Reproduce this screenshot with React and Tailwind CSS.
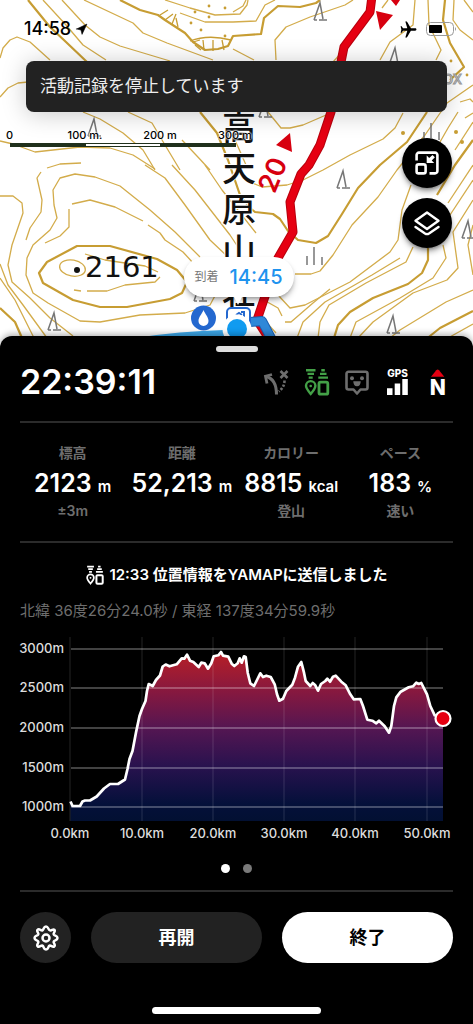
import React from "react";
import { MdAirplanemodeActive } from "react-icons/md";
import { Navigation } from "lucide-react";

const thinContours = [
  "M43,0 L66,25 L83,45 L106,60",
  "M62,0 L85,25 L100,37 L120,46 L150,55 L170,61",
  "M84,0 L133,23 L143,33 L167,43 L213,60",
  "M165,0 L190,8 L215,15 L240,14 L247,5 L248,0",
  "M180,13 L205,22 L233,22 L256,21 L265,5 L275,0",
  "M0,58 L3,48 L10,40 L17,37 L30,42 L50,60",
  "M0,97 L8,88 L18,83 L28,82",
  "M83,112 L100,119 L123,133 L143,150 L155,170",
  "M128,112 L152,123 L165,145 L180,170",
  "M182,140 L210,170",
  "M0,141 L13,144 L35,152 L80,147 L110,148 L133,155 L155,169",
  "M47,168 L60,164 L81,163",
  "M85,254 L105,260 L125,263 L145,266 L158,272",
  "M74,290 L81,291",
  "M87,291 L107,291 L125,285 L155,282 L160,277",
  "M45,243 L60,236 L69,227 L69,209",
  "M72,204 L90,200 L115,207 L143,221",
  "M148,225 L160,233 L165,240 L183,252 L195,265",
  "M200,257 L175,232 L150,210 L120,186 L95,177 L75,174 L60,178 L53,190 L54,205 L57,218 L50,230 L33,245 L27,258 L26,275 L33,293 L48,303 L80,321 L100,322 L140,315 L185,313 L210,305 L217,292",
  "M41,172 L37,178 L42,200 L41,212 L30,228 L26,240",
  "M0,196 L13,196 L22,203 L23,213 L12,245 L8,265 L12,282 L30,298 L50,318 L73,336",
  "M145,165 L165,178 L185,205 L210,240 L228,257",
  "M172,165 L195,190 L230,235 L240,250",
  "M205,165 L222,190 L256,233",
  "M0,264 L8,285 L23,305 L47,338",
  "M0,278 L15,300 L34,338",
  "M276,60 L275,40 L286,27 L310,17 L345,5 L353,0",
  "M233,49 L254,60",
  "M235,140 L246,165",
  "M233,12 L243,6 L246,0",
  "M382,8 L388,0",
  "M415,0 L413,25 L390,42 L380,60",
  "M428,0 L429,25 L441,50 L436,60",
  "M454,0 L453,20 L460,30 L473,40",
  "M464,0 L473,12",
  "M268,112 L281,128 L290,128 L303,125 L333,112",
  "M250,182 L262,187 L287,185 L303,180 L323,170 L350,155 L383,139 L395,128 L403,113",
  "M333,62 L342,52",
  "M473,85 L447,103 L425,135 L397,170 L378,197 L352,225 L333,255 L320,271 L311,274 L295,274",
  "M411,185 L402,210 L398,240 L390,252 L350,282 L305,305 L290,308 L278,295",
  "M330,289 L313,303 L291,322 L285,322",
  "M413,247 L406,262 L366,283 L329,305 L320,322 L318,338",
  "M400,258 L372,275 L325,302 L303,322 L297,338",
  "M443,245 L446,258 L433,278 L400,298 L356,322 L350,338",
  "M473,200 L453,232 L458,268 L447,280 L413,293 L373,322 L358,338",
  "M473,290 L446,302 L400,330 L390,338",
  "M473,324 L448,338",
  "M262,299 L278,308 L282,316",
  "M266,322 L276,333",
  "M473,165 L448,203",
  "M473,180 L450,215",
  "M473,225 L468,245 L473,275",
  "M460,102 L470,99 L473,102",
  "M465,118 L473,113",
  "M458,112 L448,128 L440,142",
  "M473,122 L455,150",
];

const thickContours = [
  "M28,0 L50,27 L66,42 L87,62",
  "M200,112 L217,133 L228,160 L240,195 L250,208 L255,212 L273,214 L280,219 L288,231 L298,240 L316,243 L328,236 L342,214 L358,188 L380,165 L407,142 L427,112",
  "M120,0 L140,10 L158,15 L165,20 L185,33 L193,42 L205,50 L218,49 L228,46 L233,36 L261,34 L264,18 L278,6 L300,7 L316,3 L320,0",
  "M445,0 L443,20 L450,43 L464,67 L450,80",
  "M77,246 L110,246 L157,259 L177,270 L187,282 L182,293 L170,299 L127,307 L100,307 L73,300 L43,283 L39,273 L47,262 Z",
  "M428,248 L428,260 L422,273 L408,284 L373,298 L350,312 L338,325 L334,338",
  "M0,308 L15,322 L22,338",
  "M473,311 L440,328 L425,340",
  "M473,140 L455,165 L437,195",
];

const cliffTicks =
  "M160,15 L168,10 M165,20 L173,14 M172,24 L176,14 M178,27 L176,18 M193,42 L200,40 M195,45 L201,50 M203,40 L204,50 M213,40 L213,51 M222,40 L224,50 M190,41 Q208,34 231,40";

const dots = [
  [195, 12], [209, 6], [225, 8], [209, 17], [191, 23], [201, 30], [225, 36],
  [451, 61], [467, 75], [403, 133], [456, 132], [462, 142],
];

const trees = [[88, 119], [314, 3], [259, 100], [389, 48], [337, 171], [387, 316], [462, 221], [48, 313], [194, 284]];

const hutName = [
  ["高", 140],
  ["天", 181],
  ["原", 222],
  ["山", 263],
  ["荘", 304],
];

const route =
  "M372,-4 L370,12 L344,47 L341,62 L331,112 L320,145 L309,165 L301,174 L290,202 L293,232 L278,258 L257,320 L266,334";

function TopoMap() {
  return (
    <svg
      className="absolute inset-0 h-full w-full"
      viewBox="0 0 473 352"
      preserveAspectRatio="xMidYMin slice"
      aria-hidden="true"
    >
      <rect width="473" height="352" fill="#ffffff" />
      <g fill="none" stroke="#d3ac4b" strokeWidth="1.3" strokeLinejoin="round">
        {thinContours.map((d, i) => (
          <path key={i} d={d} />
        ))}
        <ellipse cx="72.5" cy="268" rx="13" ry="8" transform="rotate(10 72 268)" />
      </g>
      <g fill="none" stroke="#c79d33" strokeWidth="2.2" strokeLinejoin="round">
        {thickContours.map((d, i) => (
          <path key={i} d={d} />
        ))}
        <path d={cliffTicks} strokeWidth="1.3" />
      </g>
      <g fill="#c79d33">
        {dots.map(([x, y], i) => (
          <circle key={i} cx={x} cy={y} r={i > 8 ? 2 : 1.4} />
        ))}
      </g>
      <g fill="none" stroke="#777" strokeWidth="1.5">
        {trees.map(([x, y], i) => (
          <path key={i} d={`M${x},${y + 17} L${x + 6},${y} L${x + 9},${y + 16} M${x + 5},${y + 17} h8 M${x},${y + 17} h3`} />
        ))}
        <path d="M307,256 v9 M314,247 v18 M322,257 v8 M424,132 v8 M431,123 v15 M439,132 v8" />
      </g>
      <g fontFamily="'Noto Sans CJK JP', sans-serif" fontSize="34" fontWeight="500" fill="#111" stroke="#fff" strokeWidth="2" paintOrder="stroke" textAnchor="middle">
        {hutName.map(([c, y]) => (
          <text key={c} x="239" y={y}>
            {c}
          </text>
        ))}
      </g>
      <text x="443" y="84" fontFamily="Inter, sans-serif" fontSize="17" fill="#fff" stroke="#999" strokeWidth="1">
        ox
      </text>
      <circle cx="77" cy="270" r="3" fill="#111" />
      <text x="85" y="277" fontFamily="'DejaVu Sans', sans-serif" fontSize="29" fill="#111">
        2161
      </text>
      <path d={route} fill="none" stroke="#b8000d" strokeWidth="9" strokeLinejoin="round" />
      <path d={route} fill="none" stroke="#e60012" strokeWidth="7" strokeLinejoin="round" />
      <g fill="#d7000f">
        <path d="M376,11 L393,15 L380,30 Z M391,0 h9 l-4,6 Z M276,145 L290,133 L292,152 Z" />
        <text x="273" y="184" fontFamily="Inter, sans-serif" fontSize="27" fontWeight="600" textAnchor="middle" transform="rotate(-68 273 175)">
          20
        </text>
      </g>
      <path d="M135,338 Q180,331 224,330 V338 Z" fill="#3ca7e8" />
      <path d="M250,322 L262,321 L272,340" fill="none" stroke="#1b5fb0" strokeWidth="10" strokeLinejoin="round" />
      <path d="M250,322 L262,321 L272,340" fill="none" stroke="#2f88d8" strokeWidth="8" strokeLinejoin="round" />
      <circle cx="203.5" cy="318" r="12.5" fill="#2468cf" />
      <path d="M203.5,310 C205,314 208.5,317 208.5,321 A5,5 0 0 1 198.5,321 C198.5,317 202,314 203.5,310 Z" fill="#fff" />
      <rect x="227" y="308" width="23" height="22" rx="4" fill="#fff" stroke="#2468cf" strokeWidth="2" />
      <path d="M236,315 l3,-2 l3,2 M241,312 h3 v6" stroke="#2468cf" strokeWidth="2" fill="none" />
      <circle cx="237" cy="329" r="14.5" fill="#fff" />
      <circle cx="237" cy="329" r="10" fill="#119bf0" />
    </svg>
  );
}

function StatusBar() {
  return (
    <div className="flex items-center justify-between pt-4 pr-4 pl-6">
      <div className="flex items-center gap-1 text-[18px] leading-[26px] font-medium text-black">
        <span>14:58</span>
        <Navigation size={13} fill="currentColor" strokeWidth={1} />
      </div>
      <div className="flex items-center gap-2 text-black">
        <MdAirplanemodeActive size={19} className="rotate-90" />
        <svg width="31" height="14" viewBox="0 0 31 14" aria-hidden="true">
          <rect x="0.5" y="0.5" width="27" height="13" rx="4" fill="none" stroke="#999" />
          <rect x="3" y="3" width="13" height="8" rx="1" fill="#000" />
          <path d="M29,5 q2,2 0,4 Z" fill="#999" />
        </svg>
      </div>
    </div>
  );
}

function ScaleBar() {
  return (
    <div className="w-[226px] pt-[17px] text-[11px] leading-[12px] font-medium text-black [text-shadow:0_0_2px_#fff,0_0_2px_#fff,0_0_2px_#fff]">
      <div className="flex">
        <span className="w-0 flex-none whitespace-nowrap"><span className="-ml-1">0</span></span>
        <span className="flex w-[150px] flex-none justify-center">100 m.</span>
        <span className="flex w-0 flex-none justify-center whitespace-nowrap">200 m</span>
        <span className="flex w-[150px] flex-none justify-center">300 m</span>
      </div>
      <div className="mt-[2px] flex h-1 border border-[#20301c]">
        <div className="flex-1 bg-[#20301c]" />
        <div className="flex-1 bg-white" />
        <div className="flex-1 bg-[#20301c]" />
      </div>
    </div>
  );
}

function MapButton({ label, children }) {
  return (
    <button
      type="button"
      aria-label={label}
      className="flex size-[50px] items-center justify-center rounded-full bg-black text-white shadow-md shadow-black/40"
    >
      {children}
    </button>
  );
}

function MapArea() {
  return (
    <section className="relative h-[352px] overflow-hidden">
      <TopoMap />
      <div className="relative">
        <StatusBar />
        <p className="mx-[26px] mt-[19px] rounded-lg bg-[#222] px-[14px] py-[13px] text-[17px] leading-[25px] text-[#eee] shadow-[0_2px_24px_rgba(0,0,0,0.22)]">
          活動記録を停止しています
        </p>
        <div className="flex items-start justify-between pr-[21px] pl-[10px]">
          <ScaleBar />
          <div className="mt-[26px] flex flex-col gap-[10px]">
            <MapButton label="全体表示">
              <svg width="26" height="26" viewBox="0 0 26 26" fill="none" stroke="currentColor" strokeWidth="2.6" aria-hidden="true">
                <path d="M2.6,10.5 V5 a2.4,2.4 0 0 1 2.4,-2.4 H21 a2.4,2.4 0 0 1 2.4,2.4 V21 a2.4,2.4 0 0 1 -2.4,2.4 H15.5" />
                <rect x="2.600" y="14.400" width="9" height="9" rx="2" />
                <path d="M12.700,5.500 L15.200,8 L18.500,4.900 L20.900,7.300 L17.700,10.600 L20.200,13 H12.700 Z" fill="currentColor" stroke="none" />
              </svg>
            </MapButton>
            <MapButton label="レイヤー">
              <svg width="28" height="26" viewBox="0 0 28 26" fill="none" stroke="currentColor" strokeWidth="2.4" strokeLinejoin="round" strokeLinecap="round" aria-hidden="true">
                <path d="M14,2.5 L25.5,10.8 L14,19 L2.5,10.8 Z" />
                <path d="M2.5,17 L12,23.500 Q14,24.800 16,23.500 L25.5,17" />
              </svg>
            </MapButton>
          </div>
        </div>
      </div>
      <div className="absolute top-[257px] left-1/2 flex h-10 -translate-x-[53px] items-center gap-[11px] rounded-full bg-white px-[11px] whitespace-nowrap shadow-md shadow-black/30">
        <span className="text-[12px] text-[#777]">到着</span>
        <span className="text-[20px] font-medium text-[#1f93ee]">14:45</span>
        <span className="absolute -bottom-2 left-[50px] border-x-4 border-t-8 border-x-transparent border-t-white" />
      </div>
    </section>
  );
}

function RouteOffIcon() {
  return (
    <svg width="28" height="28" viewBox="0 0 28 28" fill="none" stroke="#6e6e6e" strokeWidth="2.6" aria-hidden="true">
      <path d="M3,8.500 C9,10 13.500,15 13.500,26.500" strokeWidth="3" />
      <path d="M4,15.500 L2.500,8.200 L9,6.500" strokeWidth="2.800" />
      <path d="M17.500,3 L24.500,10 M24.500,3 L17.500,10" />
      <path d="M21.500,12.500 C21.500,17 19.500,20.500 16,23.500" strokeWidth="2.600" strokeDasharray="2.400 1.600" />
    </svg>
  );
}

function LocationShareIcon({ className, size }) {
  return (
    <svg className={className} width={size} height={size} viewBox="0 0 28 28" fill="none" stroke="currentColor" strokeWidth="2.4" aria-hidden="true">
      <path d="M3,2.200 h9.500 M4.500,5.900 h6.500 M5.700,9.600 h4 M18.300,2.200 h3.500 M17,5.900 h6.500 M15.300,9.600 h9.700" />
      <path d="M7.700,26 C4,21.500 3,20 3,17.800 A4.700,4.700 0 0 1 12.400,17.800 C12.400,20 11.500,21.500 7.700,26 Z" />
      <circle cx="7.700" cy="18" r="1.3" fill="currentColor" stroke="none" />
      <rect x="16" y="14.200" width="8.800" height="12" rx="1.500" strokeWidth="2.800" />
    </svg>
  );
}

function FaceIcon() {
  return (
    <svg width="28" height="28" viewBox="0 0 28 28" fill="none" stroke="#6e6e6e" strokeWidth="2.6" strokeLinejoin="round" aria-hidden="true">
      <path d="M5.500,3.800 H22.500 a2,2 0 0 1 2,2 V19.500 a2,2 0 0 1 -2,2 H17.500 L14,25.500 L10.500,21.500 H5.500 a2,2 0 0 1 -2,-2 V5.800 a2,2 0 0 1 2,-2 Z" />
      <g fill="#6e6e6e" stroke="none">
        <circle cx="9" cy="10.300" r="2" />
        <circle cx="19" cy="10.300" r="2" />
        <path d="M10.300,13.300 H17.700 Q17.700,18.300 14,18.300 Q10.300,18.300 10.300,13.300 Z" />
      </g>
    </svg>
  );
}

function GpsIcon() {
  return (
    <svg width="28" height="28" viewBox="0 0 28 28" fill="#fff" aria-hidden="true">
      <text x="14.500" y="9" fontFamily="Inter, sans-serif" fontWeight="800" fontSize="10" textAnchor="middle">
        GPS
      </text>
      <path d="M4,20.300 h5.500 V27 H4 Z M11.700,15.500 h5.500 V27 h-5.500 Z M19.300,11 h5.500 V27 h-5.500 Z" />
    </svg>
  );
}

function NorthIcon() {
  return (
    <svg className="overflow-visible" width="28" height="28" viewBox="0 0 28 28" fill="#fff" aria-hidden="true">
      <path d="M8,8.700 L13.300,2.300 Q14.700,0.800 16,2.300 L21.300,8.700 Z" fill="#e60012" />
      <text x="14.700" y="27" fontFamily="Inter, sans-serif" fontWeight="800" fontSize="21" textAnchor="middle">
        N
      </text>
    </svg>
  );
}

const stats = [
  { label: "標高", value: "2123", unit: "m", note: "±3m" },
  { label: "距離", value: "52,213", unit: "m", note: "" },
  { label: "カロリー", value: "8815", unit: "kcal", note: "登山" },
  { label: "ペース", value: "183", unit: "%", note: "速い" },
];

const profile =
  "70.5,800.5 72.5,805 80,805 82.5,800.5 85,799.5 90,799.5 96.7,795.5 104,787.5 110,783 118,783 125,778.5 127.5,768 129.5,758 132.5,750 136,731.5 139.5,715 142,708 145.5,700 147,690 148.7,683 152.7,685 156,679 160,674.5 162.7,665.5 165.7,663.5 169.5,665.3 176.7,663.3 181.7,657.3 184.3,657.7 187,653.7 190,659.7 193.3,661 198.7,666 201.3,661.7 204.7,662.3 208,667.7 211.3,662.3 213.7,655.3 218.3,654.3 221,651 223,654.7 228.3,655.7 231.7,662.7 234.3,665 237.7,662.3 239.7,657.3 241.7,661.7 244,655.3 245.7,656 247.7,671.7 250.3,682.3 254,685 257,679 260.3,672.3 263,676 266.3,674.7 270.7,676 274.7,683.3 277,693.3 279.3,699.7 283,697.7 286.3,690 292.3,683.7 295,676.7 298,665.7 301.3,661 304,671.7 305.7,680 310.3,685 312.7,682 315.3,684.3 318,689.7 321,683 325.3,680 327.3,677.7 330,680.7 333,675.7 335.7,674.7 341.3,680.7 345.7,684.3 350.3,693.3 353.7,698.3 360.3,698 363,705 367.3,718.7 372.3,719.7 376.3,722.3 379,719.7 384.7,725.3 389,731.7 391.3,725 394,705 396.3,696.3 400.7,690.7 408.7,686.3 413,685.3 416.3,681.7 418.7,683 421.3,682 427,693.3 430.3,705 434.7,714.3 443,717.3";

const altitudeLines = [
  ["3000m", 648],
  ["2500m", 687],
  ["2000m", 727],
  ["1500m", 767],
  ["1000m", 806],
];

const distanceLines = [
  ["0.0km", 70],
  ["10.0km", 142],
  ["20.0km", 213],
  ["30.0km", 284],
  ["40.0km", 355],
  ["50.0km", 427],
];

function ElevationChart() {
  return (
    <svg className="block h-auto w-full overflow-visible" viewBox="20 630 433 212" role="img" aria-label="標高グラフ">
      <defs>
        <linearGradient id="elevation" gradientUnits="userSpaceOnUse" x1="0" y1="650" x2="0" y2="820">
          <stop offset="0" stopColor="#b91f26" />
          <stop offset="0.25" stopColor="#841840" />
          <stop offset="0.46" stopColor="#531652" />
          <stop offset="0.68" stopColor="#28124e" />
          <stop offset="0.9" stopColor="#04103a" />
          <stop offset="1" stopColor="#021032" />
        </linearGradient>
      </defs>
      <polygon points={`${profile} 443,820 70.5,820`} fill="url(#elevation)" />
      {distanceLines.map(([label, x]) => (
        <g key={label}>
          <path d={`M${x},636 V820`} stroke="#fff" strokeOpacity="0.14" />
          <text x={x} y="837" fill="#ddd" fontSize="13" fontWeight="500" textAnchor="middle">
            {label}
          </text>
        </g>
      ))}
      {altitudeLines.map(([label, y]) => (
        <g key={label}>
          <path d={`M71,${y} H443`} stroke="#fff" strokeOpacity="0.35" strokeWidth="1.5" />
          <text x="64" y={y + 4} fill="#ddd" fontSize="13" fontWeight="500" textAnchor="end">
            {label}
          </text>
        </g>
      ))}
      <polyline points={profile} fill="none" stroke="#fff" strokeWidth="2.7" strokeLinejoin="round" />
      <circle cx="443" cy="717.5" r="7.5" fill="#e60012" stroke="#fff" strokeWidth="2.2" />
    </svg>
  );
}

function GearIcon() {
  return (
    <svg width="28" height="28" viewBox="0 0 28 28" fill="none" stroke="#fff" strokeWidth="2.5" strokeLinejoin="round" aria-hidden="true">
      <path d="M14,2.500 C16.500,2.500 16,5.800 18,6.400 C19.800,7 21,4.700 22.300,5.700 C24,7.200 21,9 21.700,10.500 C22.500,12 25.500,11.500 25.500,14 C25.500,16.500 22.500,16 21.700,17.500 C21,19 24,20.800 22.300,22.300 C20.800,24 19,21 17.500,21.700 C16,22.500 16.500,25.500 14,25.500 C11.500,25.500 12,22.500 10.500,21.700 C9,21 7.200,24 5.700,22.300 C4,20.800 7,19 6.300,17.500 C5.500,16 2.500,16.500 2.500,14 C2.500,11.500 5.500,12 6.300,10.500 C7,9 4,7.200 5.700,5.700 C7.200,4 9,7 10.500,6.300 C12,5.500 11.500,2.500 14,2.500 Z" />
      <circle cx="14" cy="14" r="3.500" />
    </svg>
  );
}

export default function App() {
  return (
    <main className="flex min-h-screen flex-col bg-black font-['Inter','Noto_Sans_CJK_JP',sans-serif] text-white">
      <MapArea />
      <section className="relative -mt-4 flex flex-1 flex-col rounded-t-xl bg-black pt-[10px] shadow-[0_-2px_6px_rgba(0,0,0,0.3)]">
        <div className="mx-auto h-[6px] w-[42px] rounded-full bg-[#ddd]" />
        <header className="mx-5 flex items-center justify-between border-b-2 border-[#2b2b2b] pt-2 pb-[17px]">
          <h1 className="text-[34px] leading-[44px] font-semibold">22:39:11</h1>
          <div className="flex items-center gap-3 pr-[2px]">
            <RouteOffIcon />
            <LocationShareIcon className="text-[#43a047]" size={28} />
            <FaceIcon />
            <GpsIcon />
            <NorthIcon />
          </div>
        </header>
        <dl className="grid grid-cols-4 px-[18px] pt-5 pb-5 text-center whitespace-nowrap">
          {stats.map((s) => (
            <div key={s.label} className="flex flex-col items-center">
              <dt className="text-[14px] leading-[20px] font-semibold text-[#6e6e6e]">{s.label}</dt>
              <dd className="mt-1 flex h-8 items-baseline gap-[6px] leading-[32px] font-semibold">
                <span className="text-[25px]">{s.value}</span>
                <span className="text-[15px]">{s.unit}</span>
              </dd>
              <dd className="mt-[2px] h-5 text-[14px] leading-[20px] font-semibold text-[#6e6e6e]">{s.note}</dd>
            </div>
          ))}
        </dl>
        <div className="mx-5 border-t-2 border-[#2b2b2b] pt-5">
          <p className="flex items-center justify-center gap-1 text-[15px] leading-[24px] font-semibold">
            <LocationShareIcon className="text-white" size={20} />
            12:33 位置情報をYAMAPに送信しました
          </p>
          <p className="mt-3 text-[15px] leading-[24px] text-[#6e6e6e]">
            北緯 36度26分24.0秒 / 東経 137度34分59.9秒
          </p>
          <div className="mt-2">
            <ElevationChart />
          </div>
          <div className="flex justify-center gap-[13px] pt-[21px] pb-[17px]">
            <span className="size-[9px] rounded-full bg-white" />
            <span className="size-[9px] rounded-full bg-[#7a7a7a]" />
          </div>
        </div>
        <footer className="mx-5 flex items-center gap-5 border-t-2 border-[#2b2b2b] pt-5">
          <button type="button" aria-label="設定" className="flex size-[51px] flex-none items-center justify-center rounded-full bg-[#222]">
            <GearIcon />
          </button>
          <button type="button" className="h-[51px] flex-1 rounded-full bg-[#222] text-[18px] font-bold">
            再開
          </button>
          <button type="button" className="h-[51px] flex-1 rounded-full bg-white text-[18px] font-bold text-black">
            終了
          </button>
        </footer>
        <div className="mx-auto mt-auto mb-[10px] h-[7px] w-[169px] rounded-full bg-white" />
      </section>
    </main>
  );
}
